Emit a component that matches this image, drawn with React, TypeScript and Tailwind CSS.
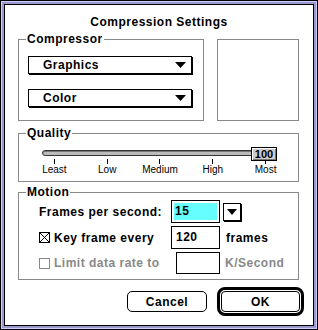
import React from 'react';

const chicago = "font-['Liberation_Sans',Arial,sans-serif] font-bold text-[12px] tracking-[0.5px] text-black";
const geneva = "font-['Liberation_Sans',Arial,sans-serif] font-normal tracking-normal text-[10px] leading-[12px] text-black";

const DownTri = ({ w = 11, h = 6 }: { w?: number; h?: number }) => (
  <svg width={w} height={h} viewBox={`0 0 ${w} ${h}`}>
    <polygon points={`0,0 ${w},0 ${w / 2},${h}`} fill="#000" />
  </svg>
);

const Popup = ({ label }: { label: string }) => (
  <div className="w-[164px] h-[18px] border border-black bg-white shadow-[1px_1px_0_#000] flex items-center justify-between pl-[14px] pr-[5px] leading-[16px]">
    <span>{label}</span>
    <DownTri />
  </div>
);

const Checkbox = ({ checked, dim }: { checked?: boolean; dim?: boolean }) => (
  <div className={`w-[11px] h-[11px] border bg-white ${dim ? 'border-[#888]' : 'border-black'}`}>
    {checked && (
      <svg width="9" height="9" viewBox="0 0 9 9">
        <path d="M0 0 L9 9 M9 0 L0 9" stroke="#000" strokeWidth="1" />
      </svg>
    )}
  </div>
);

const ticks = ['Least', 'Low', 'Medium', 'High', 'Most'];

export default function App() {
  return (
    <div className="w-[318px] h-[330px] border border-black bg-[#ccccff]">
      <div className="w-full h-full border border-[#ccccff]">
        <div className="w-full h-full border-2 border-[#9999cc]">
          <div className={`w-full h-full border border-black bg-white flex flex-col ${chicago}`}>
            <div className="pt-[9px] h-[25px] leading-[16px] text-center">Compression Settings</div>

            <div className="mt-[1px] flex pl-[13px] gap-[13px]">
              <fieldset className="w-[186px] h-[90px] border border-[#888]">
                <legend className="ml-[7px] px-[1px] leading-[16px]">Compressor</legend>
                <div className="pl-[9px]">
                  <div className="mt-[9px]">
                    <Popup label="Graphics" />
                  </div>
                  <div className="mt-[15px]">
                    <Popup label="Color" />
                  </div>
                </div>
              </fieldset>
              <div className="mt-[8px] w-[82px] h-[82px] border border-[#888]" />
            </div>

            <fieldset className="mt-[4px] ml-[13px] w-[281px] h-[57px] border border-[#888]">
              <legend className="ml-[7px] px-[1px] leading-[16px]">Quality</legend>
              <div className="mt-[6px] ml-[23px] relative w-[235px] h-[12px] flex items-center">
                <div className="w-[216px] h-[6px] rounded-l-[3px] border border-[#333] bg-[#bbbbbb] shadow-[inset_0_1px_0_#777]" />
                <div className="absolute right-0 top-0 w-[26px] h-[14px] border border-black bg-[#cccccc] shadow-[inset_1px_1px_0_#fff,inset_-1px_-1px_0_#777] flex items-center justify-center text-[11px] leading-[12px] tracking-normal">
                  100
                </div>
              </div>
              <div className="ml-[9px] w-[264px] grid grid-cols-5">
                {ticks.map((t) => (
                  <div key={t} className="flex flex-col items-center">
                    <div className="w-px h-[5px] bg-black" />
                    <span className={geneva}>{t}</span>
                  </div>
                ))}
              </div>
            </fieldset>

            <fieldset className="mt-[2px] ml-[13px] w-[281px] h-[96px] border border-[#888]">
              <legend className="ml-[7px] px-[1px] leading-[16px]">Motion</legend>
              <div className="pl-[20px]">
                <div className="flex items-center h-[23px]">
                  <span className="w-[132px] leading-[16px]">Frames per second:</span>
                  <div className="w-[49px] h-[23px] border border-black p-[2px] bg-white">
                    <div className="w-full h-full bg-[#66ffff] pl-[1px] leading-[17px]">15</div>
                  </div>
                  <div className="ml-[3px] w-[18px] h-[18px] border border-black bg-white shadow-[1px_1px_0_#000] flex items-center justify-center">
                    <DownTri w={10} h={6} />
                  </div>
                </div>
                <div className="mt-[3px] flex items-center h-[23px]">
                  <div className="w-[132px] flex items-center gap-[4px]">
                    <Checkbox checked />
                    <span className="leading-[16px]">Key frame every</span>
                  </div>
                  <div className="w-[49px] h-[23px] border border-black pl-[4px] leading-[21px]">120</div>
                  <span className="ml-[6px] leading-[16px]">frames</span>
                </div>
                <div className="mt-[3px] flex items-center h-[22px] text-[#888]">
                  <div className="w-[137px] flex items-center gap-[4px]">
                    <Checkbox dim />
                    <span className="leading-[16px]">Limit data rate to</span>
                  </div>
                  <div className="w-[44px] h-[22px] border border-black" />
                  <span className="ml-[5px] leading-[16px]">K/Second</span>
                </div>
              </div>
            </fieldset>

            <div className="mt-[7px] flex items-center justify-end pr-[9px] gap-[10px]">
              <div className="w-[80px] h-[21px] border border-black rounded-[5px] flex items-center justify-center leading-[16px]">
                Cancel
              </div>
              <div className="w-[87px] h-[29px] border-[3px] border-black rounded-[8px] p-[1px]">
                <div className="w-full h-full border border-black rounded-[4px] flex items-center justify-center leading-[16px]">
                  OK
                </div>
              </div>
            </div>
          </div>
        </div>
      </div>
    </div>
  );
}
